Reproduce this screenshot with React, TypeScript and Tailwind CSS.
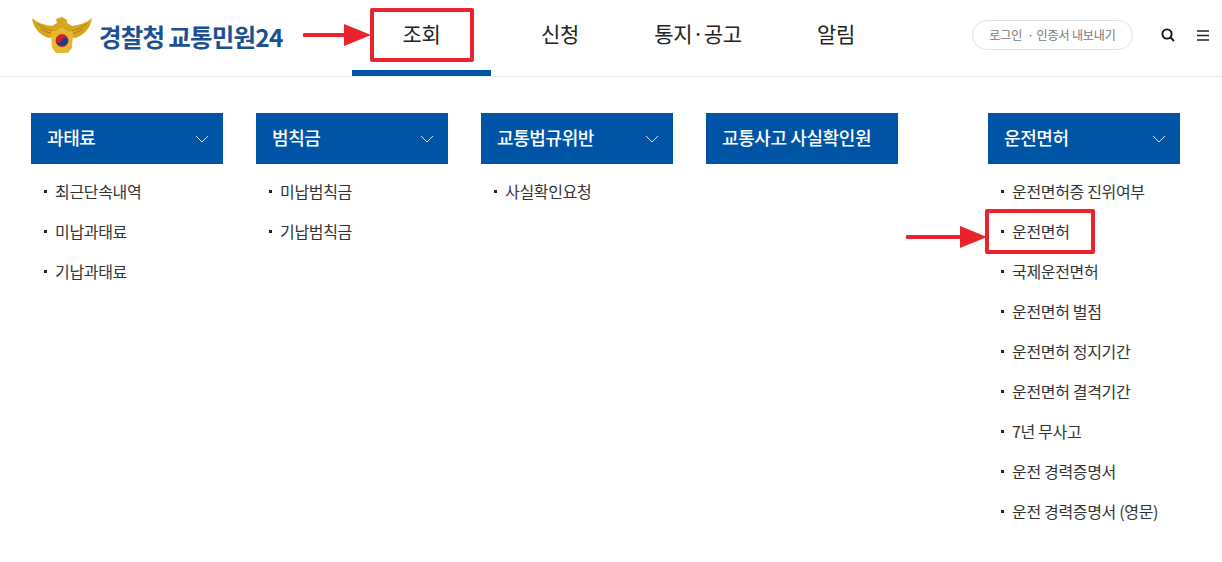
import React from "react";

const font = { fontFamily: '"Noto Sans CJK KR", "Noto Sans", sans-serif' };

const columns = [
  { title: "과태료", chevron: true, items: ["최근단속내역", "미납과태료", "기납과태료"] },
  { title: "범칙금", chevron: true, items: ["미납범칙금", "기납범칙금"] },
  { title: "교통법규위반", chevron: true, items: ["사실확인요청"] },
  { title: "교통사고 사실확인원", chevron: false, items: [] as string[] },
];
const license = [
  "운전면허증 진위여부",
  "운전면허",
  "국제운전면허",
  "운전면허 벌점",
  "운전면허 정지기간",
  "운전면허 결격기간",
  "7년 무사고",
  "운전 경력증명서",
  "운전 경력증명서 (영문)",
];

function Logo() {
  return (
    <svg width="60" height="37" viewBox="0 0 60 37" className="shrink-0">
      <path d="M0 1 C6 6 12 8 20 9 L25 6 L24 2 L30 0 L35 3 L35 6 L40 9 C48 8 54 6 60 1 C59 10 53 18 43 21 L38 20 L22 20 L17 21 C7 18 1 10 0 1Z" fill="#d9a520" />
      <path d="M5 6 C10 11 16 13 22 14 M55 6 C50 11 44 13 38 14 M9 12 C14 15 18 16 22 17 M51 12 C46 15 42 16 38 17" stroke="#a87c14" strokeWidth="0.9" fill="none" />
      <path d="M19 15 L30 8 L41 15 L40 31 L36 36 L24 36 L20 31Z" fill="#e8b92f" />
      <path d="M22 14 L30 9 L38 14" stroke="#b98a18" strokeWidth="1" fill="none" />
      <circle cx="30" cy="23.5" r="6.4" fill="#c8202f" />
      <path d="M23.7 22.7 A3.2 3.2 0 0 0 30 23.5 A3.2 3.2 0 0 1 36.3 24.3 A6.4 6.4 0 0 1 23.7 22.7Z" fill="#1b3f8f" />
    </svg>
  );
}

function Chevron() {
  return (
    <svg width="14" height="8" viewBox="0 0 14 8" fill="none" className="shrink-0">
      <path d="M1 1 L7 7 L13 1" stroke="#ffffff" strokeWidth="1" opacity="0.85" />
    </svg>
  );
}

function Arrow({ width, className }: { width: number; className: string }) {
  return (
    <svg width={width} height="24" viewBox={`0 0 ${width} 24`} className={className}>
      <path d={`M1.5 12 L${width - 26} 12`} stroke="#e8232b" strokeWidth="4" strokeLinecap="round" />
      <path d={`M${width - 27} 1 L${width} 12 L${width - 27} 23Z`} fill="#e8232b" />
    </svg>
  );
}

function List({ items }: { items: string[] }) {
  return (
    <ul className="pt-[7px]">
      {items.map((t) => (
        <li key={t} className="flex h-[40px] items-center pl-[13px] text-[16px] tracking-[-0.33px] text-[#333333]">
          <span className="mr-[8px] h-[3px] w-[3px] shrink-0 bg-[#222222]" />
          <span className="whitespace-nowrap">{t}</span>
        </li>
      ))}
    </ul>
  );
}

function Column({ title, chevron, items, className = "" }: { title: string; chevron: boolean; items: string[]; className?: string }) {
  return (
    <div className={`w-[192px] shrink-0 ${className}`}>
      <div className="flex h-[51px] items-center justify-between bg-[#0054a6] pl-[16px] pr-[14px] text-[18px] font-medium tracking-[-0.4px] text-white">
        <span className="whitespace-nowrap pb-[2px]">{title}</span>
        {chevron && <Chevron />}
      </div>
      <List items={items} />
    </div>
  );
}

export default function App() {
  return (
    <div style={font} className="relative h-[562px] w-[1222px] overflow-hidden bg-white">
      <header className="flex h-[77px] items-stretch border-b border-[#eceef0]">
        <div className="flex w-[352px] shrink-0 items-center pb-[5px] pl-[32px]">
          <Logo />
          <span className="ml-[7px] whitespace-nowrap pt-[3px] text-[24.5px] font-bold tracking-[-0.75px] [word-spacing:-1px] text-[#1c4f94]">경찰청 교통민원24</span>
        </div>
        <nav className="flex text-[21px] tracking-[-0.3px] text-[#222222]">
          <a className="flex w-[139px] items-center justify-center border-b-[6px] border-[#0054a6] pb-[2px]">조회</a>
          <a className="flex w-[138px] items-center justify-center pb-[8px]">신청</a>
          <a className="flex w-[138px] items-center justify-center pb-[8px]">통지·공고</a>
          <a className="flex w-[138px] items-center justify-center pb-[8px]">알림</a>
        </nav>
        <div className="flex flex-1 items-center pb-[6px] pl-[67px]">
          <span className="flex h-[30px] w-[161px] items-center justify-center rounded-full border border-[#dfe2e6] pb-[1px] text-[12px] tracking-[-0.1px] text-[#777777]">
            로그인&nbsp;&nbsp;· 인증서 내보내기
          </span>
          <svg width="14" height="14" viewBox="0 0 14 14" fill="none" className="ml-[28px]">
            <circle cx="6" cy="6" r="4.6" stroke="#111111" strokeWidth="1.9" />
            <path d="M9.4 9.4 L13 13" stroke="#111111" strokeWidth="1.9" />
          </svg>
          <svg width="12" height="11" viewBox="0 0 12 11" className="ml-[22px]">
            <path d="M0 1 H12 M0 5.5 H12 M0 10 H12" stroke="#222222" strokeWidth="1.5" />
          </svg>
        </div>
      </header>

      <main className="flex gap-[33px] pl-[31px] pr-[42px] pt-[36px]">
        {columns.map((c) => (
          <Column key={c.title} {...c} />
        ))}
        <Column title="운전면허" chevron items={license} className="ml-[57px]" />
      </main>

      <div className="absolute left-[370px] top-[8px] h-[54px] w-[104px] rounded-[2px] border-[4px] border-[#e8232b]" />
      <div className="absolute left-[985px] top-[209px] h-[45px] w-[110px] rounded-[2px] border-[4px] border-[#e8232b]" />
      <Arrow width={68} className="absolute left-[303px] top-[23px]" />
      <Arrow width={81} className="absolute left-[906px] top-[225px]" />
    </div>
  );
}
